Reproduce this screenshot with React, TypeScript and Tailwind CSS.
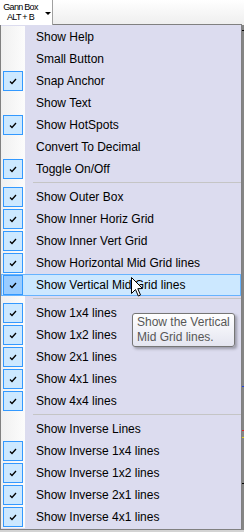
import React from 'react';

interface Item {
  label: string;
  checked?: boolean;
  active?: boolean;
}

const groups: Item[][] = [
  [
    { label: 'Show Help' },
    { label: 'Small Button' },
    { label: 'Snap Anchor', checked: true },
    { label: 'Show Text' },
    { label: 'Show HotSpots', checked: true },
    { label: 'Convert To Decimal' },
    { label: 'Toggle On/Off', checked: true },
  ],
  [
    { label: 'Show Outer Box', checked: true },
    { label: 'Show Inner Horiz Grid', checked: true },
    { label: 'Show Inner Vert Grid', checked: true },
    { label: 'Show Horizontal Mid Grid lines', checked: true },
    { label: 'Show Vertical Mid Grid lines', checked: true, active: true },
  ],
  [
    { label: 'Show 1x4 lines', checked: true },
    { label: 'Show 1x2 lines', checked: true },
    { label: 'Show 2x1 lines', checked: true },
    { label: 'Show 4x1 lines', checked: true },
    { label: 'Show 4x4 lines', checked: true },
  ],
  [
    { label: 'Show Inverse Lines' },
    { label: 'Show Inverse 1x4 lines', checked: true },
    { label: 'Show Inverse 1x2 lines', checked: true },
    { label: 'Show Inverse 2x1 lines', checked: true },
    { label: 'Show Inverse 4x1 lines', checked: true },
  ],
];

const Check = () => (
  <svg width="8" height="7" viewBox="0 0 8 7">
    <path d="M1 3.5 L3 5.5 L7 1" fill="none" stroke="#000" strokeWidth="1.3" />
  </svg>
);

const MenuRow: React.FC<{ item: Item }> = ({ item }) => {
  if (item.active) {
    return (
      <div className="flex items-center h-[22px] bg-[#cce8ff] border border-[#66b3ff]">
        <div className="w-[23px] h-[20px] flex items-center">
          <div className="ml-[1px] w-[20px] h-[20px] bg-[#99ccff] border border-[#3399ff] flex items-center justify-center">
            <Check />
          </div>
        </div>
        <span className="pl-[11px] text-[12px] text-black whitespace-nowrap">{item.label}</span>
      </div>
    );
  }
  return (
    <div className="flex items-center h-[22px]">
      <div className="w-[24px] h-full bg-gradient-to-r from-[#f0f0f0] to-[#fcfcfc] flex items-center">
        {item.checked && (
          <div className="ml-[2px] w-[20px] h-[20px] bg-[#cce8ff] border border-[#3399ff] flex items-center justify-center">
            <Check />
          </div>
        )}
      </div>
      <span className="pl-[11px] text-[12px] text-black whitespace-nowrap">{item.label}</span>
    </div>
  );
};

const Separator = () => (
  <div className="flex h-[6px]">
    <div className="w-[24px] h-full bg-gradient-to-r from-[#f0f0f0] to-[#fcfcfc]" />
    <div className="flex-1 ml-[8px] pt-[2px]">
      <div className="h-px bg-[#c5c5c5]" />
    </div>
  </div>
);

export default function App() {
  return (
    <div className="relative w-[244px] h-[532px] overflow-hidden flex flex-col bg-[#d3d3d3] font-['Liberation_Sans',Arial,sans-serif]">
      <div className="flex h-[25px] bg-gradient-to-b from-white to-[#eeeeee]">
        <div className="w-[53px] h-[25px] bg-white border-r border-[#a0a0a0] flex items-start">
          <div className="w-[41px] flex flex-col items-center pt-[2px] text-[9px] leading-[10px] tracking-[-0.7px] text-black">
            <span>Gann Box</span>
            <span>ALT + B</span>
          </div>
          <svg width="6" height="4" viewBox="0 0 6 4" className="mt-[12px] ml-[4px]">
            <path d="M0 0 H6 L3 3 Z" fill="#000" />
          </svg>
        </div>
        <div className="w-[189px] border-b border-[#808080]" />
        <div className="flex-1" />
      </div>

      <div className="flex">
        <div className="w-[242px] bg-[#dcdcef] border-l border-r border-b border-[#808080] py-[1px]">
          {groups.map((group, gi) => (
            <React.Fragment key={gi}>
              {gi > 0 && <Separator />}
              {group.map((item) => (
                <MenuRow key={item.label} item={item} />
              ))}
            </React.Fragment>
          ))}
        </div>
        <div className="flex-1 flex flex-col bg-[#858585]">
          <div className="h-[5px]" />
          <div className="h-px bg-black" />
          <div className="h-[355px]" />
          <div className="h-px bg-[#2040e0]" />
          <div className="h-[43px]" />
          <div className="h-px bg-[#e02020]" />
          <div className="h-[6px]" />
          <div className="h-px bg-[#e0d020]" />
          <div className="h-[45px]" />
          <div className="h-px bg-black" />
        </div>
      </div>

      {/* tooltip */}
      <div className="absolute left-[132px] top-[313px] w-[103px] h-[34px] rounded-[3px] border border-[#767676] bg-gradient-to-b from-white to-[#e4e5f0] shadow-[2px_2px_3px_rgba(0,0,0,0.3)] px-[4px] pt-[1px] text-[12px] leading-[15px] text-[#575757] whitespace-nowrap">
        <div>Show the Vertical</div>
        <div>Mid Grid lines.</div>
      </div>

      {/* mouse cursor */}
      <svg width="13" height="21" viewBox="0 0 13 21" className="absolute left-[131px] top-[277px]">
        <path
          d="M0.5 0.5 L0.5 16.5 L4.5 12.5 L7.3 19 L9.5 18 L6.8 11.7 L11.5 11.5 Z"
          fill="#fff"
          stroke="#000"
          strokeWidth="1"
          strokeLinejoin="miter"
        />
      </svg>
    </div>
  );
}
